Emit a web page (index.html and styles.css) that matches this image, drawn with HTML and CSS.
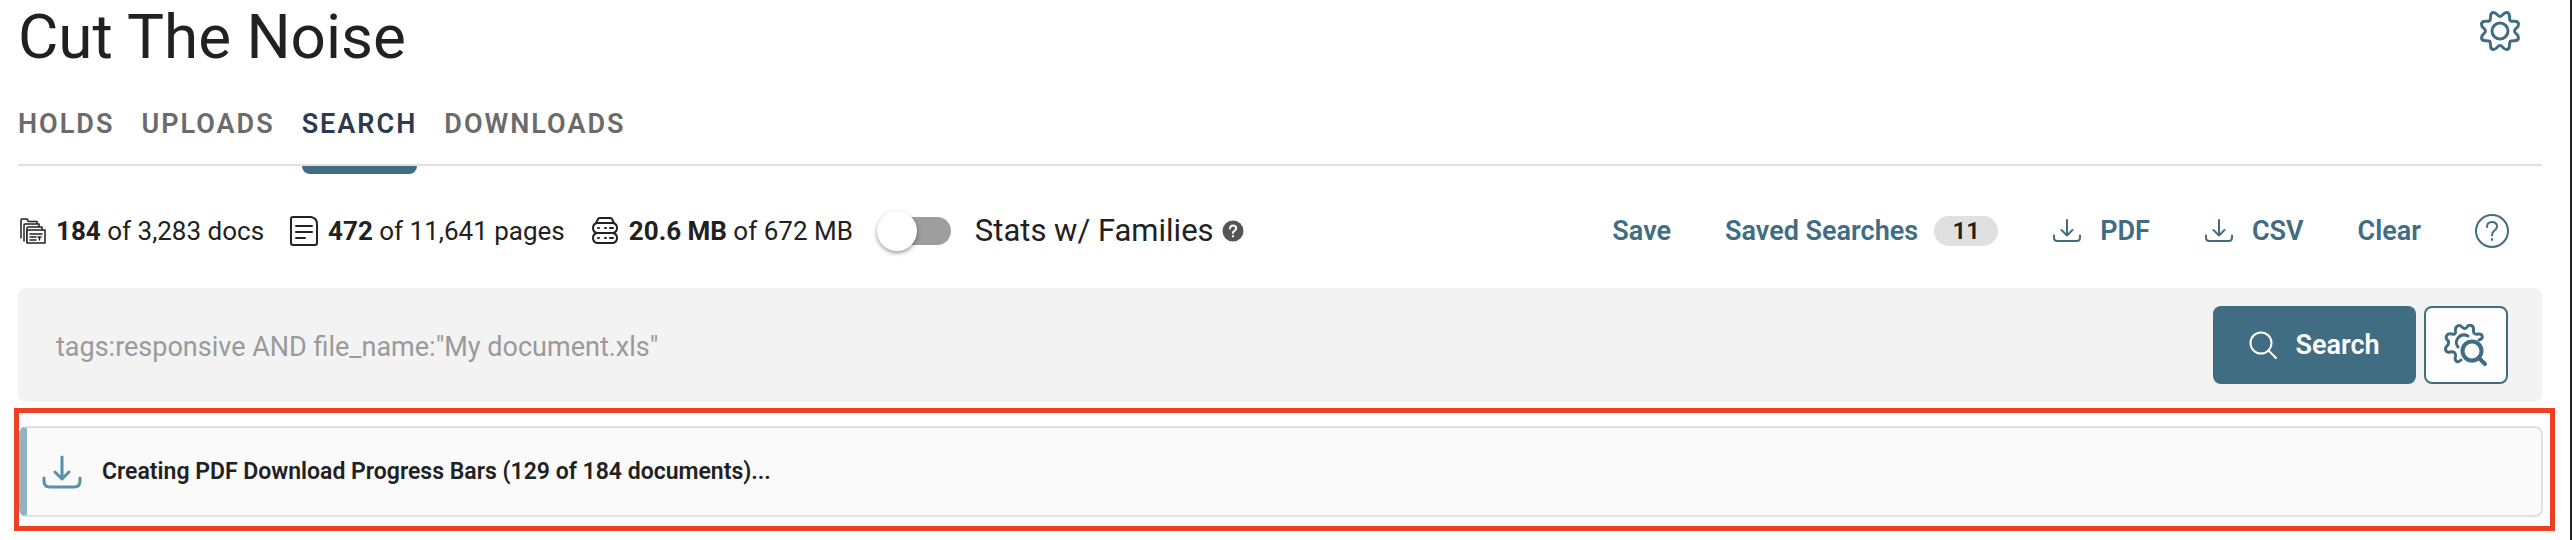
FILE: index.html
```html
<!DOCTYPE html>
<html lang="en">
<head>
<meta charset="utf-8">
<title>Cut The Noise</title>
<link rel="stylesheet" href="styles.css">
</head>
<body>
<svg class="sprite" aria-hidden="true">
  <symbol id="download" viewBox="0 0 28 24"><path d="M14 1v15M8.500 11l5.500 5.500 5.500-5.500M1 16.500v2q0 3.500 3.500 3.500h19q3.500 0 3.500-3.500v-2"/></symbol>
</svg>
<main class="page">
  <header class="head">
    <h1 class="title">Cut The Noise</h1>
    <button class="icon-btn settings" type="button" aria-label="Settings">
      <svg width="42" height="42" viewBox="0 0 42 42"><circle cx="21" cy="21" r="8"/><path d="M21 6.500C24 6.500 24 2 28 2.500C32 3 29.500 8 31.250 10.750C34 12.500 39 9.500 39.500 14C40 18 35.500 18 35.500 21C35.500 24 40 24 39.500 28C39 32.500 34 29.500 31.250 31.250C29.500 34 32 39 28 39.500C24 40 24 35.500 21 35.500C18 35.500 18 40 14 39.500C10 39 12.500 34 10.750 31.250C8 29.500 3 32.500 2.500 28C2 24 6.500 24 6.500 21C6.500 18 2 18 2.500 14C3 9.500 8 12.500 10.750 10.750C12.500 8 10 3 14 2.500C18 2 18 6.500 21 6.500Z"/></svg>
    </button>
  </header>
  <nav class="tabs" aria-label="Matter">
    <a class="tab" href="#holds">HOLDS</a>
    <a class="tab" href="#uploads">UPLOADS</a>
    <a class="tab active" href="#search" aria-current="page">SEARCH</a>
    <a class="tab" href="#downloads">DOWNLOADS</a>
  </nav>
  <section class="bar">
    <div class="stats">
      <span class="stat"><svg class="fine" width="28" height="28" viewBox="0 0 28 28"><path d="M3 21V3q0-1 1-1h5l1.500 2.500H19V7M6 24V8q0-1 1-1h14v3M9 25V11q0-1 1-1h14v3"/><path class="paper" d="M9 13h18v13H9z"/><path d="M12 17h12M12 20h6M12 23h6M21.500 23v-3M20 20h3"/></svg><span><b>184</b> of 3,283 docs</span></span>
      <span class="stat"><svg width="28" height="30" viewBox="0 0 28 30"><path d="M1 3q0-2 2-2h18q6 1 6 7v19q0 2-2 2H3q-2 0-2-2zM6 10h16M6 16h16M6 22h9"/></svg><span><b>472</b> of 11,641 pages</span></span>
      <span class="stat"><svg width="28" height="28" viewBox="0 0 28 28"><path d="M5 6l2-4q.500-1 1.500-1h11q1 0 1.500 1l2 4M6 6h16q4 1 4 5t-4 5H6q-4-1-4-5t4-5zM6 16h16q4 1 4 5t-4 5H6q-4-1-4-5t4-5z"/><path d="M7 11h1M14 11h1M19 11h3M7 21h1M14 21h1M19 21h3"/></svg><span><b>20.6 MB</b> of 672 MB</span></span>
      <label class="families"><input class="switch" type="checkbox" role="switch"><span>Stats w/ Families</span>
        <svg class="help-solid" width="22" height="22" viewBox="0 0 22 22"><circle cx="11" cy="11" r="10.500"/><path d="M8 8.500q.3-3 3.200-3t3 2.700q0 1.700-1.800 2.600-1.400.8-1.400 2.200M11 16v.6"/></svg></label>
    </div>
    <div class="actions">
      <button class="link" type="button">Save</button>
      <button class="link" type="button">Saved Searches <span class="count">11</span></button>
      <button class="link dl" type="button"><svg width="30" height="24"><use href="#download"/></svg>PDF</button>
      <button class="link dl" type="button"><svg width="30" height="24"><use href="#download"/></svg>CSV</button>
      <button class="link" type="button">Clear</button>
      <button class="icon-btn help" type="button" aria-label="Help"><svg width="34" height="34" viewBox="0 0 34 34"><circle cx="17" cy="17" r="16"/><path d="M12 13q0-5 5-5t5 4.500q0 2.500-2.800 4.300Q17 18.200 17 21.500M17 25v1"/></svg></button>
    </div>
  </section>
  <form class="search">
    <input class="query" type="text" aria-label="Search query" placeholder="tags:responsive AND file_name:&quot;My document.xls&quot;">
    <button class="go" type="button"><svg width="28" height="28" viewBox="0 0 28 28"><circle cx="12" cy="12" r="10.500"/><path d="M19.500 19.500L27 27"/></svg>Search</button>
    <button class="advanced" type="button" aria-label="Advanced search"><svg width="44" height="44" viewBox="0 0 44 44"><path d="M35 17C40 16 39 10 34 11Q29 12 29.500 7C30 2 25 1 23 4Q21 7 18 4C15 1 11 3 11.500 8Q12 12 8 11C2 10 1 15 3.500 17Q6 20 3 23C0 26 2 30 6 29Q12 28 11.500 33C10 39 14 40 17 37M24 13C16 9 9 18 14 24"/><g class="heavy"><circle cx="28" cy="28" r="9.500"/><path d="M35 35l6 6"/></g></svg></button>
  </form>
  <section class="callout">
    <div class="progress" role="status"><svg width="40" height="34" viewBox="0 0 40 34"><path d="M20 2v22M13 17l7 7 7-7M2 23v3q0 6 6 6h24q6 0 6-6v-3"/></svg><span>Creating PDF Download Progress Bars (129 of 184 documents)...</span></div>
  </section>
</main>
</body>
</html>
```
FILE: styles.css
```css
* { box-sizing: border-box; }
body { margin: 0; background: #fff; color: #212121; font-family: Roboto, "Liberation Sans", sans-serif; font-size: 27px; line-height: 36px; }
svg { fill: none; stroke: currentColor; stroke-width: 2; stroke-linecap: round; stroke-linejoin: round; flex: none; display: block; }
button { border: 0; background: none; padding: 0; font: inherit; color: #406d82; cursor: pointer; display: flex; align-items: center; }
.sprite { position: absolute; width: 0; height: 0; }
.page { min-height: 100vh; padding: 0 28px 0 18px; border-right: 2px solid #222; }
.head { display: flex; justify-content: space-between; align-items: flex-start; padding-right: 21px; }
.title { margin: 0; font-size: 62px; line-height: 74px; font-weight: 400; }
.icon-btn { flex: none; }
.settings { padding-top: 10px; }
.settings svg { stroke-width: 3; }
.tabs { display: flex; gap: 27px; height: 92px; border-bottom: 2px solid #e0e0e0; }
.tab { position: relative; color: #6b6b6b; text-decoration: none; font-size: 27px; font-weight: 600; line-height: 32px; letter-spacing: 2px; padding-top: 34px; }
.active { color: #2b3a4e; }
.active::after { content: ""; position: absolute; left: 0; right: 0; bottom: -10px; height: 8px; background: #406d82; border-radius: 0 0 8px 8px; }
.bar { display: flex; justify-content: space-between; align-items: center; height: 122px; padding-top: 8px; }
.stats, .actions { display: flex; align-items: center; white-space: nowrap; }
.stats { gap: 26px; font-size: 26px; }
.stat { display: flex; align-items: center; gap: 10px; }
.stat b { font-weight: 700; }
.fine { stroke-width: 1.5; }
.paper { fill: #fff; }
.families { display: flex; align-items: center; gap: 8px; font-size: 31px; }
.switch { appearance: none; position: relative; width: 72px; height: 28px; margin: 0 16px 0 0; border-radius: 14px; background: #9e9e9e; }
.switch::before { content: ""; position: absolute; left: -2px; top: -6px; width: 40px; height: 40px; border-radius: 50%; background: #fff; box-shadow: 0 2px 4px #0006; }
.help-solid circle { fill: #555; stroke: none; }
.help-solid path { stroke: #fff; }
.actions { gap: 54px; padding-right: 33px; font-weight: 600; }
.link { gap: 16px; }
.dl { gap: 18px; }
.count { width: 64px; line-height: 30px; border-radius: 15px; background: #e0e0e0; color: #212121; font-size: 24px; text-align: center; }
.search { display: flex; align-items: center; gap: 8px; height: 114px; padding: 0 34px 0 38px; background: #f3f3f3; border-radius: 8px; }
.query { flex: 1; min-width: 0; height: 78px; padding: 4px 0 0; border: 0; background: none; font: inherit; color: #212121; }
.query::placeholder { color: #9a9a9a; opacity: 1; }
.go { width: 203px; height: 78px; justify-content: center; gap: 18px; border-radius: 8px; background: #406d82; color: #fff; font-weight: 600; }
.advanced { width: 84px; height: 78px; justify-content: center; border: 2px solid #406d82; border-radius: 8px; background: #fff; }
.advanced svg { stroke-width: 3; }
.heavy { stroke-width: 4; }
.callout { margin: 6px -13px 0 -4px; padding: 13px 7px 9px 0; border: 5px solid #ec4125; }
.progress { display: flex; align-items: center; gap: 20px; height: 91px; padding-left: 15px; border: 2px solid #e0e0e0; border-left: 8px solid #92b3c1; border-radius: 8px; background: #fafafa; font-size: 23px; font-weight: 600; }
.progress svg { color: #5790a9; stroke-width: 3; }
```
